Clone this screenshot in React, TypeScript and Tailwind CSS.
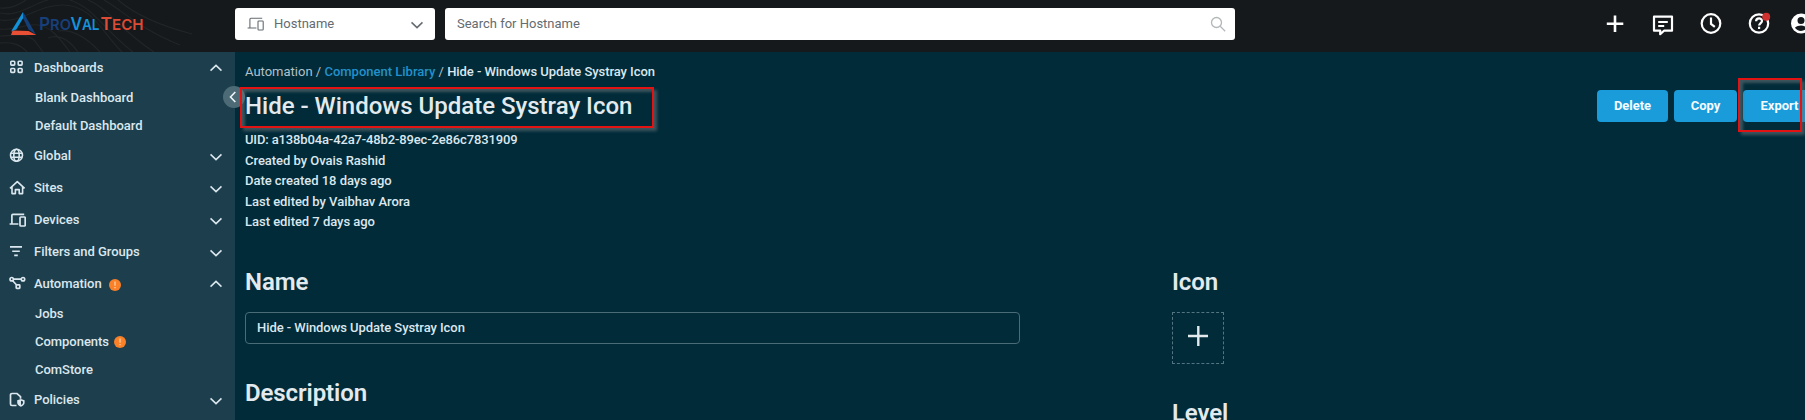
import React from "react";

type IconProps = { className?: string };

const Chevron = ({ up, className = "" }: { up?: boolean; className?: string }) => (
  <svg className={className} width="12" height="8" viewBox="0 0 12 8" fill="none" stroke="currentColor" strokeWidth="1.6">
    <path d={up ? "M.5 6.6 6 1.3l5.5 5.3" : "M.5 1.4 6 6.7l5.5-5.3"} />
  </svg>
);

const GridIcon = () => (
  <svg width="18" height="18" viewBox="0 0 18 18" fill="none" stroke="currentColor" strokeWidth="1.6">
    <rect x="2.8" y="2.2" width="3.9" height="3.9" rx="0.8" />
    <rect x="10.2" y="2.2" width="3.9" height="3.9" rx="0.8" />
    <rect x="2.8" y="9.5" width="3.9" height="3.9" rx="0.8" />
    <rect x="10.2" y="9.5" width="3.9" height="3.9" rx="0.8" />
  </svg>
);

const GlobeIcon = () => (
  <svg width="18" height="18" viewBox="0 0 18 18" fill="none" stroke="currentColor" strokeWidth="1.6">
    <circle cx="8.5" cy="8.2" r="6" />
    <ellipse cx="8.5" cy="8.2" rx="2.7" ry="6" />
    <path d="M3 6.2h11M3 10.2h11" />
  </svg>
);

const HomeIcon = () => (
  <svg width="18" height="18" viewBox="0 0 18 18" fill="none" stroke="currentColor" strokeWidth="1.6">
    <path d="M2 9.3 9.3 2.6l7.3 6.7M4 8v6.6h3.4v-4h3.8v4h3.4V8" strokeLinejoin="round" />
  </svg>
);

const DevicesIcon = ({ className = "", thin }: IconProps & { thin?: boolean }) => (
  <svg className={className} width="18" height="18" viewBox="0 0 18 18" fill="none" stroke="currentColor" strokeWidth={thin ? 1.1 : 1.7}>
    <path d="M16.2 3.3H4.9q-1 0-1 1v8.4M1.6 13h8.8" />
    <rect x="12" y="6" width="5.2" height="9" rx="0.8" />
  </svg>
);

const FilterIcon = () => (
  <svg width="18" height="18" viewBox="0 0 18 18" fill="none" stroke="currentColor" strokeWidth="1.6">
    <path d="M2 3.9h12M4.2 8.2h7.6M6.2 12.4h3.6" />
  </svg>
);

const AutomationIcon = () => (
  <svg width="18" height="18" viewBox="0 0 18 18" fill="none" stroke="currentColor" strokeWidth="1.7">
    <circle cx="3.7" cy="4.2" r="1.7" />
    <circle cx="15" cy="4.2" r="1.7" />
    <rect x="8.2" y="9.8" width="3.6" height="3.6" rx="0.6" />
    <path d="M5.3 4.2h8M4.7 5.7l3.7 4.1" />
  </svg>
);

const PoliciesIcon = () => (
  <svg width="18" height="18" viewBox="0 0 18 18" fill="none" stroke="currentColor" strokeWidth="1.7">
    <path d="M8.5 14.5H4q-1.5 0-1.5-1.5V3.8q0-1.3 1.5-1.3h5l3.5 3.2v2" />
    <path d="M9.2 9.2 12.9 8l3.7 1.2v2.6c0 1.9-1.5 3-3.7 4-2.2-1-3.7-2.1-3.7-4z" fill="currentColor" stroke="none" />
    <path d="M13 9.8v4.2c1.3-.7 2-1.4 2-2.5v-1.1z" fill="#1d3f4d" stroke="none" />
  </svg>
);

const Alert = ({ className = "" }: IconProps) => (
  <svg className={className} width="12" height="12" viewBox="0 0 12 12">
    <circle cx="6" cy="6" r="6" fill="#fa8128" />
    <path d="M6 2.6v4.2M6 8v1.3" stroke="#ffd0a5" strokeWidth="1.3" />
  </svg>
);

function Group({ icon, label, open, alert }: { icon: React.ReactNode; label: string; open?: boolean; alert?: boolean }) {
  return (
    <div className="flex h-8 items-center pl-2 pr-[11px]">
      <span className="w-[26px]">{icon}</span>
      <span>{label}</span>
      {alert && <Alert className="ml-[7px] mt-[2px]" />}
      <Chevron up={open} className={open ? "ml-auto" : "ml-auto mt-[2px]"} />
    </div>
  );
}

function Item({ label, alert }: { label: string; alert?: boolean }) {
  return (
    <div className="flex h-7 items-center pl-[35px]">
      {label}
      {alert && <Alert className="ml-[5px]" />}
    </div>
  );
}

const Logo = () => (
  <svg width="140" height="30" viewBox="0 0 140 30" className="ml-2 shrink-0">
    <path d="M15 1 3 20.5l5.3-2L15.8 6z" fill="#1191d8" />
    <path d="M15.2 1 28 23.8l-7.4-5.2L15 7z" fill="#153f79" />
    <path d="M4.6 19.5 20.5 20l7.8 4L3 24z" fill="#e94f35" />
    <g fontFamily="Inter, sans-serif" fontWeight="600">
      <text x="31" y="19" fill="#173f79" fontSize="17.5" textLength="32" lengthAdjust="spacingAndGlyphs">
        P<tspan fontSize="15">RO</tspan>
      </text>
      <text x="62.5" y="19" fill="#1493dc" fontSize="17.5" textLength="29" lengthAdjust="spacingAndGlyphs">
        V<tspan fontSize="15">AL</tspan>
      </text>
      <text x="92.5" y="19" fill="#dc4b34" fontSize="17.5" textLength="43" lengthAdjust="spacingAndGlyphs">
        T<tspan fontSize="15">ECH</tspan>
      </text>
    </g>
  </svg>
);

const Contours = () => (
  <svg className="absolute left-0 top-0" width="235" height="52" viewBox="0 0 235 52" fill="none" stroke="#212527" strokeWidth="1.2">
    <path d="M0 13C18 17 30 5 48 0M0 20c22 3 38-15 62-15 30 0 38 25 60 47M0 8C12 9 20 4 26 0M0 29c18 2 24-6 38-4s22 14 32 27M0 36c14 0 24-4 34 4l9 12M0 43c12-1 20 1 27 9M70 0c24 8 36 32 63 52M88 0c20 8 32 30 66 52M104 0c18 10 34 28 76 45M118 0c14 12 36 24 74 34M48 38c10-4 20 0 30 14M58 31c14-2 28 6 42 21" />
  </svg>
);

const HeaderIcons = () => (
  <div className="ml-auto flex shrink-0 items-center gap-6 text-white">
    <svg width="24" height="24" viewBox="0 0 24 24" fill="none" stroke="currentColor" strokeWidth="2.6">
      <path d="M12 3.5v16.5M3.8 11.7h16.5" />
    </svg>
    <svg width="24" height="24" viewBox="0 0 24 24" fill="none" stroke="currentColor" strokeWidth="2.2">
      <path d="M3 4.7h18v14h-8L9.2 22.2v-3.5H3z" strokeLinejoin="round" />
      <path d="M7.2 10h9.6M7.2 14h6" />
    </svg>
    <svg width="24" height="24" viewBox="0 0 24 24" fill="none" stroke="currentColor" strokeWidth="2.2">
      <circle cx="12" cy="11.5" r="9.3" />
      <path d="M12 5.5v6.5l3.8 2.8" />
    </svg>
    <svg width="24" height="24" viewBox="0 0 24 24" fill="none" stroke="currentColor" strokeWidth="2.2">
      <circle cx="12" cy="11.5" r="9.2" />
      <path d="M9.1 9.3c0-3.8 5.9-3.8 5.9-.3 0 2-2.9 2.2-2.9 4.6M12.1 14.8v2.2" />
      <circle cx="19.2" cy="4.7" r="4" fill="#cf3030" stroke="none" />
    </svg>
    <svg className="-ml-1.5" width="24" height="24" viewBox="0 0 24 24" fill="currentColor">
      <path d="M12 1.5a10 10 0 1 0 0 20 10 10 0 0 0 0-20m0 3.5a3.5 3.5 0 1 1 0 7 3.5 3.5 0 0 1 0-7M12 19c-2.5 0-4.8-1.2-6.1-3.2 1.500-1.500 4-2.200 6.100-2.200s4.600.7 6.100 2.200c-1.300 2-3.600 3.200-6.100 3.200" />
    </svg>
  </div>
);

const Button = ({ className, children }: { className: string; children: React.ReactNode }) => (
  <button className={`h-8 rounded-[4px] bg-[#1a9cdb] text-[13px] font-bold text-[#f3fbff] ${className}`}>{children}</button>
);

export default function App() {
  return (
    <div className="h-[420px] w-full overflow-hidden bg-[#012b39] font-['Roboto',sans-serif] text-[13px] font-medium tracking-[-0.03px] text-[#dbe7ee]">
      <header className="relative flex h-[52px] w-[1813px] bg-[#15191c]">
        <Contours />
        <div className="relative flex w-[235px] shrink-0 pt-[11px]">
          <Logo />
        </div>
        <div className="mt-2 flex h-8 w-[200px] shrink-0 items-center rounded-[3px] bg-white px-3 font-normal tracking-normal text-[#646b71]">
          <DevicesIcon thin className="-ml-px" />
          <span className="ml-[10px]">Hostname</span>
          <Chevron className="ml-auto mt-px" />
        </div>
        <div className="ml-[10px] mt-2 flex h-8 w-[790px] shrink-0 items-center rounded-[3px] bg-white pl-3 pr-[9px] font-normal tracking-normal text-[#646b71]">
          Search for Hostname
          <svg className="ml-auto" width="16" height="16" viewBox="0 0 16 16" fill="none" stroke="#b3b7b9" strokeWidth="1.3">
            <circle cx="6.5" cy="6.5" r="5" />
            <path d="m10.2 10.2 5 5" />
          </svg>
        </div>
        <div className="ml-auto flex h-12 items-center">
          <HeaderIcons />
        </div>
      </header>

      <div className="flex h-[368px] w-[1816px]">
        <nav className="relative w-[235px] shrink-0 border-r-2 border-[#1a4050] bg-[#1d3f4d]">
          <Group icon={<GridIcon />} label="Dashboards" open />
          <Item label="Blank Dashboard" />
          <Item label="Default Dashboard" />
          <Group icon={<GlobeIcon />} label="Global" />
          <Group icon={<HomeIcon />} label="Sites" />
          <Group icon={<DevicesIcon />} label="Devices" />
          <Group icon={<FilterIcon />} label="Filters and Groups" />
          <Group icon={<AutomationIcon />} label="Automation" open alert />
          <Item label="Jobs" />
          <Item label="Components" alert />
          <Item label="ComStore" />
          <Group icon={<PoliciesIcon />} label="Policies" />
          <div className="absolute left-[223px] top-[34px] flex h-[22px] w-[22px] items-center justify-center rounded-full bg-[#4d6b76]">
            <svg className="-ml-0.5" width="8" height="12" viewBox="0 0 8 12" fill="none" stroke="#eef5f8" strokeWidth="1.6">
              <path d="M6.3 1 1.5 6l4.8 5" />
            </svg>
          </div>
        </nav>

        <main className="relative flex-1 pl-[10px]">
          <div className="flex h-10 items-center whitespace-pre font-normal text-[#b3c1c9]">
            <span className="tracking-normal">Automation / </span>
            <span className="font-medium tracking-normal text-[#2391c9]">Component Library</span>
            <span> / </span>
            <span className="font-medium tracking-[-0.06px] text-[#dbe7ee]">Hide - Windows Update Systray Icon</span>
          </div>
          <div className="flex h-[38px] items-start justify-between">
            <h1 className="text-2xl leading-7 tracking-normal text-[#e3eaee]">Hide - Windows Update Systray Icon</h1>
            <div className="-mt-[2px] flex gap-1.5">
              <Button className="w-[71px]">Delete</Button>
              <Button className="w-[63px]">Copy</Button>
              <Button className="w-[73px]">Export</Button>
            </div>
          </div>
          <div className="h-[102px] leading-[20.5px]">
            <p className="tracking-[-0.135px]">UID: a138b04a-42a7-48b2-89ec-2e86c7831909</p>
            <p>Created by Ovais Rashid</p>
            <p>Date created 18 days ago</p>
            <p>Last edited by Vaibhav Arora</p>
            <p>Last edited 7 days ago</p>
          </div>
          <div className="flex pt-[34px] text-[#e3eaee]">
            <section className="w-[927px]">
              <h2 className="text-2xl font-semibold leading-8 tracking-[-0.1px]">Name</h2>
              <div className="mt-[14px] flex h-8 w-[775px] items-center rounded-[4px] border border-[#4a6b78] px-[11px] tracking-[-0.06px] text-[#dbe7ee]">
                Hide - Windows Update Systray Icon
              </div>
              <h2 className="mt-[33px] text-2xl font-semibold leading-8 tracking-[-0.1px]">Description</h2>
            </section>
            <section>
              <h2 className="text-2xl font-semibold leading-8 tracking-[-0.1px]">Icon</h2>
              <div className="mt-[14px] flex h-[52px] w-[52px] items-center justify-center border border-dashed border-[#537582] pb-1">
                <svg width="20" height="20" viewBox="0 0 20 20" fill="none" stroke="currentColor" strokeWidth="2.4">
                  <path d="M10.3 0v20M0 10h20" />
                </svg>
              </div>
              <h2 className="mt-[33px] text-2xl font-semibold leading-8 tracking-[-0.1px]">Level</h2>
            </section>
          </div>
          <div className="absolute left-[5px] top-[35px] h-[41px] w-[414px] border-2 border-[#e31313] shadow-[3px_3px_3px_#65717699,inset_3px_3px_3px_#65717699]" />
          <div className="absolute left-[1503px] top-[26px] h-[54px] w-[64px] border-2 border-[#e31313] shadow-[3px_3px_3px_#65717699,inset_3px_3px_3px_#65717699]" />
        </main>
      </div>
    </div>
  );
}
